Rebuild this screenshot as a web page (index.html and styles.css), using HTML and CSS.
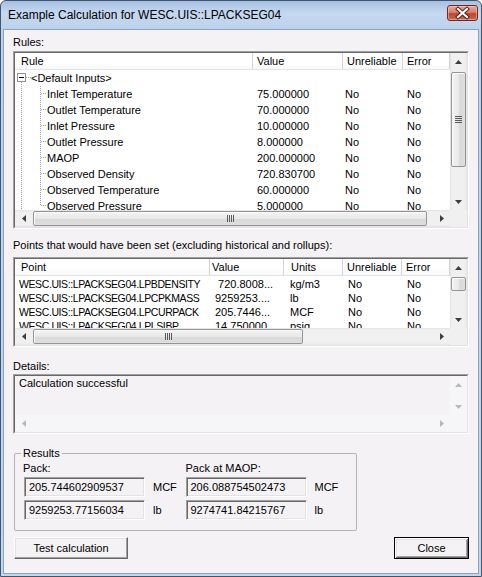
FILE: index.html
```html
<!DOCTYPE html>
<html>
<head>
<meta charset="utf-8">
<link rel="stylesheet" href="styles.css">
</head>
<body>
<div class="window">
  <div class="titlebar">
    <span class="title">Example Calculation for WESC.UIS::LPACKSEG04</span>
    <div class="close-x">
      <svg width="29" height="14" viewBox="0 0 29 14">
        <path d="M10 3 L19 11 M19 3 L10 11" stroke="#4a1c14" stroke-width="4" stroke-linecap="square"/>
        <path d="M10 3 L19 11 M19 3 L10 11" stroke="#ffffff" stroke-width="2.2" stroke-linecap="square"/>
      </svg>
    </div>
  </div>
  <div class="client">
    <div class="label lbl-rules">Rules:</div>
    <div class="sunken lv lv-rules">
      <div class="sunken-in lv-grid">
        <div class="lv-content">
          <div class="lv-header">
            <div class="hcell first">Rule</div>
            <div class="hcell">Value</div>
            <div class="hcell">Unreliable</div>
            <div class="hcell">Error</div>
          </div>
          <div class="lv-body">
            <div class="lv-row">
              <div class="cell tree-cell"><svg class="tree" width="16" height="16" viewBox="0 0 16 16"><path d="M11 7.5 H16" class="dot-h"/><path d="M6.5 12 V16" class="dot-v"/><rect x="2.5" y="3.5" width="8" height="8" fill="#fff" stroke="#919191"/><path d="M4 7.5 H9" stroke="#000"/></svg>&lt;Default Inputs&gt;</div>
              <div class="cell"></div><div class="cell"></div><div class="cell"></div>
            </div>
            <div class="lv-row">
              <div class="cell tree-cell"><svg class="tree" width="32" height="16" viewBox="0 0 32 16"><path d="M6.5 0 V16 M25.5 0 V16" class="dot-v"/><path d="M26 7.5 H32" class="dot-h"/></svg>Inlet Temperature</div>
              <div class="cell">75.000000</div><div class="cell c-unrel">No</div><div class="cell">No</div>
            </div>
            <div class="lv-row">
              <div class="cell tree-cell"><svg class="tree" width="32" height="16" viewBox="0 0 32 16"><path d="M6.5 0 V16 M25.5 0 V16" class="dot-v"/><path d="M26 7.5 H32" class="dot-h"/></svg>Outlet Temperature</div>
              <div class="cell">70.000000</div><div class="cell c-unrel">No</div><div class="cell">No</div>
            </div>
            <div class="lv-row">
              <div class="cell tree-cell"><svg class="tree" width="32" height="16" viewBox="0 0 32 16"><path d="M6.5 0 V16 M25.5 0 V16" class="dot-v"/><path d="M26 7.5 H32" class="dot-h"/></svg>Inlet Pressure</div>
              <div class="cell">10.000000</div><div class="cell c-unrel">No</div><div class="cell">No</div>
            </div>
            <div class="lv-row">
              <div class="cell tree-cell"><svg class="tree" width="32" height="16" viewBox="0 0 32 16"><path d="M6.5 0 V16 M25.5 0 V16" class="dot-v"/><path d="M26 7.5 H32" class="dot-h"/></svg>Outlet Pressure</div>
              <div class="cell">8.000000</div><div class="cell c-unrel">No</div><div class="cell">No</div>
            </div>
            <div class="lv-row">
              <div class="cell tree-cell"><svg class="tree" width="32" height="16" viewBox="0 0 32 16"><path d="M6.5 0 V16 M25.5 0 V16" class="dot-v"/><path d="M26 7.5 H32" class="dot-h"/></svg>MAOP</div>
              <div class="cell">200.000000</div><div class="cell c-unrel">No</div><div class="cell">No</div>
            </div>
            <div class="lv-row">
              <div class="cell tree-cell"><svg class="tree" width="32" height="16" viewBox="0 0 32 16"><path d="M6.5 0 V16 M25.5 0 V16" class="dot-v"/><path d="M26 7.5 H32" class="dot-h"/></svg>Observed Density</div>
              <div class="cell">720.830700</div><div class="cell c-unrel">No</div><div class="cell">No</div>
            </div>
            <div class="lv-row">
              <div class="cell tree-cell"><svg class="tree" width="32" height="16" viewBox="0 0 32 16"><path d="M6.5 0 V16 M25.5 0 V16" class="dot-v"/><path d="M26 7.5 H32" class="dot-h"/></svg>Observed Temperature</div>
              <div class="cell">60.000000</div><div class="cell c-unrel">No</div><div class="cell">No</div>
            </div>
            <div class="lv-row">
              <div class="cell tree-cell"><svg class="tree" width="32" height="16" viewBox="0 0 32 16"><path d="M6.5 0 V16 M25.5 0 V8" class="dot-v"/><path d="M26 7.5 H32" class="dot-h"/></svg>Observed Pressure</div>
              <div class="cell">5.000000</div><div class="cell c-unrel">No</div><div class="cell">No</div>
            </div>
          </div>
        </div>
        <div class="vscroll vs-rules">
          <div class="arrow"><svg width="7" height="4"><polygon points="0,4 3.5,0 7,4" class="tri"/></svg></div>
          <div class="vtrack"><div class="vthumb"><svg width="7" height="7"><path d="M0 0.5H7M0 2.5H7M0 4.5H7M0 6.5H7" stroke="#5a5a5a"/></svg></div></div>
          <div class="arrow"><svg width="7" height="4"><polygon points="0,0 3.5,4 7,0" class="tri"/></svg></div>
        </div>
        <div class="hscroll hs-rules">
          <div class="arrow"><svg width="4" height="7"><polygon points="4,0 0,3.5 4,7" class="tri"/></svg></div>
          <div class="htrack"><div class="hthumb"><svg width="7" height="7"><path d="M0.5 0V7M2.5 0V7M4.5 0V7M6.5 0V7" stroke="#5a5a5a"/></svg></div></div>
          <div class="arrow"><svg width="4" height="7"><polygon points="0,0 4,3.5 0,7" class="tri"/></svg></div>
        </div>
        <div class="corner"></div>
      </div>
    </div>

    <div class="label lbl-points">Points that would have been set (excluding historical and rollups):</div>
    <div class="sunken lv lv-points">
      <div class="sunken-in lv-grid">
        <div class="lv-content">
          <div class="lv-header">
            <div class="hcell first">Point</div>
            <div class="hcell h-val">Value</div>
            <div class="hcell h-units">Units</div>
            <div class="hcell">Unreliable</div>
            <div class="hcell">Error</div>
          </div>
          <div class="lv-body">
            <div class="lv-row">
              <div class="cell c-point">WESC.UIS::LPACKSEG04.LPBDENSITY</div>
              <div class="cell c-val">&nbsp;720.8008...</div><div class="cell c-units">kg/m3</div><div class="cell c-no">No</div><div class="cell c-no">No</div>
            </div>
            <div class="lv-row">
              <div class="cell c-point">WESC.UIS::LPACKSEG04.LPCPKMASS</div>
              <div class="cell c-val">9259253....</div><div class="cell c-units">lb</div><div class="cell c-no">No</div><div class="cell c-no">No</div>
            </div>
            <div class="lv-row">
              <div class="cell c-point">WESC.UIS::LPACKSEG04.LPCURPACK</div>
              <div class="cell c-val">205.7446...</div><div class="cell c-units">MCF</div><div class="cell c-no">No</div><div class="cell c-no">No</div>
            </div>
            <div class="lv-row">
              <div class="cell c-point">WESC.UIS::LPACKSEG04.LPLSIBP</div>
              <div class="cell c-val">14.750000</div><div class="cell c-units">psig</div><div class="cell c-no">No</div><div class="cell c-no">No</div>
            </div>
          </div>
        </div>
        <div class="vscroll vs-points">
          <div class="arrow"><svg width="7" height="4"><polygon points="0,4 3.5,0 7,4" class="tri"/></svg></div>
          <div class="vtrack"><div class="vthumb"></div></div>
          <div class="arrow"><svg width="7" height="4"><polygon points="0,0 3.5,4 7,0" class="tri"/></svg></div>
        </div>
        <div class="hscroll hs-points">
          <div class="arrow"><svg width="4" height="7"><polygon points="4,0 0,3.5 4,7" class="tri"/></svg></div>
          <div class="htrack"><div class="hthumb"><svg width="7" height="7"><path d="M0.5 0V7M2.5 0V7M4.5 0V7M6.5 0V7" stroke="#5a5a5a"/></svg></div></div>
          <div class="arrow"><svg width="4" height="7"><polygon points="0,0 4,3.5 0,7" class="tri"/></svg></div>
        </div>
        <div class="corner"></div>
      </div>
    </div>

    <div class="label lbl-details">Details:</div>
    <div class="sunken details">
      <div class="sunken-in lv-grid details-grid">
        <div class="details-text">Calculation successful</div>
        <div class="vscroll vs-details">
          <div class="arrow"><svg width="7" height="4"><polygon points="0,4 3.5,0 7,4" class="tri-dis"/></svg></div>
          <div class="vtrack flat"></div>
          <div class="arrow"><svg width="7" height="4"><polygon points="0,0 3.5,4 7,0" class="tri-dis"/></svg></div>
        </div>
        <div class="hscroll hs-details">
          <div class="arrow"><svg width="4" height="7"><polygon points="4,0 0,3.5 4,7" class="tri-dis"/></svg></div>
          <div class="htrack flat"></div>
          <div class="arrow"><svg width="4" height="7"><polygon points="0,0 4,3.5 0,7" class="tri-dis"/></svg></div>
        </div>
        <div class="corner flat"></div>
      </div>
    </div>

    <fieldset class="results">
      <legend>Results</legend>
      <div class="res-cols">
        <div class="res-col">
          <div class="res-label">Pack:</div>
          <div class="res-row"><div class="tb">205.744602909537</div><span class="unit">MCF</span></div>
          <div class="res-row"><div class="tb">9259253.77156034</div><span class="unit">lb</span></div>
        </div>
        <div class="res-col">
          <div class="res-label">Pack at MAOP:</div>
          <div class="res-row"><div class="tb">206.088754502473</div><span class="unit">MCF</span></div>
          <div class="res-row"><div class="tb">9274741.84215767</div><span class="unit">lb</span></div>
        </div>
      </div>
    </fieldset>

    <div class="buttons">
      <button class="btn btn-test">Test calculation</button>
      <button class="btn btn-close">Close</button>
    </div>
  </div>
</div>
</body>
</html>
```

FILE: styles.css
```css
html, body {
  margin: 0;
  padding: 0;
}
body {
  font-family: "Liberation Sans", Arial, sans-serif;
  font-size: 11px;
  color: #000;
  background: #fff;
}
.window {
  width: 482px;
  height: 577px;
  box-sizing: border-box;
  border: 1px solid #44546b;
  border-radius: 6px 6px 0 0;
  background: linear-gradient(#a7c1e2 0, #c4d8ef 12px, #bcd2ec 28px, #c2d6ee 100%);
  padding: 0 2px 2px 2px;
  display: flex;
  flex-direction: column;
}
.titlebar {
  height: 28px;
  display: flex;
  align-items: center;
  flex: none;
}
.title {
  margin-left: 5px;
  font-size: 12px;
  color: #000;
}
.close-x {
  margin-left: auto;
  margin-right: 1px;
  align-self: flex-start;
  margin-top: 4px;
  width: 29px;
  height: 14px;
  border: 1px solid #6b2a1f;
  border-radius: 3px;
  background: linear-gradient(#eaa797 0, #d8806b 45%, #c0432a 55%, #cf6a52 100%);
  box-shadow: inset 0 0 0 1px rgba(255, 220, 210, 0.45);
}
.close-x svg {
  display: block;
}
.client {
  flex: 1;
  background: #f4f2f5;
  border: 1px solid #8ca3bf;
  padding: 0 9px;
  display: flex;
  flex-direction: column;
}
.label {
  line-height: 13px;
  height: 13px;
  white-space: nowrap;
}
.lbl-rules { margin-top: 6px; }
.lbl-points { margin-top: 10px; }
.lbl-details { margin-top: 13px; }

.sunken {
  border: 1px solid;
  border-color: #a0a0a0 #ffffff #ffffff #a0a0a0;
  box-sizing: border-box;
}
.sunken-in {
  border: 1px solid;
  border-color: #696969 #e3e3e3 #e3e3e3 #696969;
  height: 100%;
  box-sizing: border-box;
}
.lv {
  margin-top: 2px;
}
.lv-rules {
  height: 178px;
  --cols: 238px 90px 60px 47px;
}
.lv-points {
  margin-top: 5px;
  height: 90px;
  --cols: 195px 74px 59px 59px 48px;
}
.lv-grid {
  display: grid;
  grid-template-columns: 1fr 17px;
  grid-template-rows: 1fr 17px;
  background: #fff;
}
.lv-content {
  overflow: hidden;
  min-height: 0;
}
.lv-header {
  display: grid;
  grid-template-columns: var(--cols);
  height: 17px;
  box-sizing: border-box;
  border-bottom: 1px solid #e5e5e5;
  background: linear-gradient(#ffffff, #ffffff 60%, #f7f8fa);
}
.hcell {
  border-right: 1px solid #d5d5d5;
  padding-left: 4px;
  line-height: 16px;
  white-space: nowrap;
  overflow: hidden;
}
.hcell.first { padding-left: 6px; }
.lv-points .h-val { padding-left: 2px; }
.lv-points .h-units { padding-left: 7px; }
.lv-body {
  white-space: nowrap;
}
.lv-row {
  display: grid;
  grid-template-columns: var(--cols);
  height: 16px;
  line-height: 16px;
}
.lv-points .lv-body { padding-top: 1px; }
.lv-points .lv-row {
  height: 14px;
  line-height: 14px;
}
.cell {
  overflow: hidden;
  padding-left: 4px;
  white-space: nowrap;
}
.c-unrel { padding-left: 2px; }
.tree-cell {
  padding-left: 0;
  display: flex;
  align-items: center;
}
.tree {
  display: block;
  flex: none;
}
.dot-v, .dot-h {
  stroke: #a0a0a0;
  stroke-width: 1;
  stroke-dasharray: 1 1;
  fill: none;
}
.c-point {
  padding-left: 4px;
  font-size: 10.5px;
  letter-spacing: -0.4px;
}
.c-val { padding-left: 5px; }
.c-units { padding-left: 6px; }
.c-no { padding-left: 5px; }

/* scrollbars */
.vscroll {
  display: flex;
  flex-direction: column;
  background: linear-gradient(to right, #e3e3e3, #f0f0f0 2px, #f0f0f0 15px, #e3e3e3);
  min-height: 0;
}
.hscroll {
  display: flex;
  background: linear-gradient(#e3e3e3, #f0f0f0 2px, #f0f0f0 15px, #e3e3e3);
  min-width: 0;
}
.arrow {
  width: 17px;
  height: 17px;
  flex: none;
  display: flex;
  align-items: center;
  justify-content: center;
}
.arrow svg { display: block; }
.tri { fill: #3e3e3e; }
.tri-dis { fill: #b8b8b8; }
.vtrack {
  flex: 1;
  min-height: 0;
  padding: 0 1px;
}
.htrack {
  flex: 1;
  min-width: 0;
  padding: 1px 0;
}
.vthumb {
  box-sizing: border-box;
  border: 1px solid #959595;
  border-radius: 2px;
  background: linear-gradient(to right, #f4f4f4, #e8e8e8 50%, #d9d9d9 50%, #dedede);
  box-shadow: inset 1px 1px 0 #fbfbfb;
  display: flex;
  align-items: center;
  justify-content: center;
}
.hthumb {
  box-sizing: border-box;
  height: 15px;
  border: 1px solid #959595;
  border-radius: 2px;
  background: linear-gradient(#f4f4f4, #e8e8e8 50%, #d9d9d9 50%, #dedede);
  box-shadow: inset 1px 1px 0 #fbfbfb;
  display: flex;
  align-items: center;
  justify-content: center;
}
.vthumb svg, .hthumb svg { display: block; }
.vs-rules .vthumb { margin-top: 2px; height: 95px; }
.vs-points .vthumb { margin-top: 1px; height: 14px; }
.hs-rules .hthumb { margin-left: 1px; width: 394px; }
.hs-points .hthumb { margin-left: 1px; width: 270px; }
.corner { background: #f0f0f0; }

/* details */
.details {
  margin-top: 1px;
  height: 60px;
}
.details-grid {
  background: #f4f2f5;
}
.details-text {
  padding: 1px 0 0 4px;
  line-height: 13px;
}
.flat, .vs-details, .hs-details {
  background: #f6f5f7;
}

/* results group */
.results {
  margin: 13px 0 0 1px;
  width: 343px;
  box-sizing: border-box;
  min-width: 0;
  border: 1px solid #b4b4b4;
  border-radius: 2px;
  padding: 0 8px 9px 8px;
  height: 84px;
}
.results legend {
  padding: 0 2px;
  margin-left: -2px;
  line-height: 13px;
}
.res-cols {
  display: flex;
}
.res-col {
  width: 169px;
}
.res-label {
  margin-top: 2px;
  line-height: 13px;
  height: 13px;
}
.res-row {
  display: flex;
  align-items: center;
  margin-top: 3px;
}
.res-label + .res-row { margin-top: 2px; }
.tb {
  width: 121px;
  height: 20px;
  box-sizing: border-box;
  border: 1px solid;
  border-color: #a0a0a0 #ffffff #ffffff #a0a0a0;
  box-shadow: inset 1px 1px 0 #696969, inset -1px -1px 0 #e3e3e3;
  padding-left: 4px;
  line-height: 18px;
  background: #f4f2f5;
  margin-left: 1px;
}
.res-col + .res-col .tb { margin-left: 0; }
.unit {
  margin-left: 8px;
}

/* buttons */
.buttons {
  display: flex;
  justify-content: space-between;
  margin-top: 6px;
}
.btn {
  font-family: "Liberation Sans", Arial, sans-serif;
  font-size: 11px;
  color: #000;
  height: 22px;
  box-sizing: border-box;
  background: #f4f2f5;
  padding: 0;
  border: 1px solid;
  border-color: #ffffff #696969 #696969 #ffffff;
  box-shadow: inset -1px -1px 0 #a0a0a0, inset 1px 1px 0 #e3e3e3;
}
.btn-test {
  width: 114px;
  margin-left: 1px;
}
.btn-close {
  width: 75px;
  border: 1px solid #000;
  box-shadow: inset 1px 1px 0 #ffffff, inset -1px -1px 0 #696969, inset 2px 2px 0 #e3e3e3, inset -2px -2px 0 #a0a0a0;
}
```
